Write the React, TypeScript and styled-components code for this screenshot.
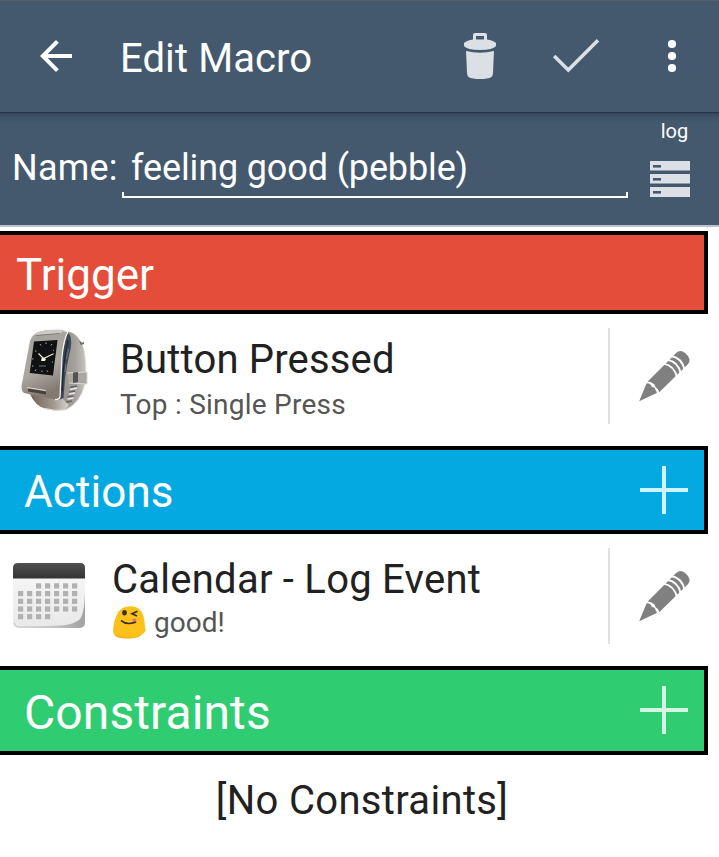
import React from 'react';
import styled, { createGlobalStyle } from 'styled-components';

const GlobalStyle = createGlobalStyle`
  * { box-sizing: border-box; }
  body { margin: 0; background: #fff; font-family: Roboto, "Noto Sans", sans-serif; }
  svg { display: block; flex: none; }
`;

const Screen = styled.main`
  width: 719px;
  height: 857px;
  overflow: hidden;
  background: #fff;
`;

const Label = styled.span<{ $size: number; $line: number; $color?: string; $spacing?: number }>`
  display: block;
  white-space: pre;
  font-size: ${(p) => p.$size}px;
  line-height: ${(p) => p.$line}px;
  color: ${(p) => p.$color ?? '#fff'};
  letter-spacing: ${(p) => p.$spacing ?? 0}px;
`;

const AppBar = styled.header`
  display: grid;
  grid-template-columns: 120px 1fr 96px 96px 95px;
  height: 113px;
  background: #44596d;
  border-top: 1px solid #52616f;
  border-bottom: 1px solid #22334a;
`;

const IconButton = styled.button`
  display: flex;
  align-items: center;
  justify-content: center;
  height: 110px;
  padding: 0;
  border: 0;
  background: none;
`;

const BackButton = styled(IconButton)`
  justify-content: flex-start;
  padding-left: 32px;
`;

const BarTitle = styled.h1`
  margin: 0;
  padding-top: 34px;
  font-weight: 400;
`;

const NameBar = styled.section`
  display: flex;
  height: 114px;
  background: linear-gradient(#354759 0, #3f5366 4px, #44596d 10px);
  border-bottom: 2px solid #bac3cf;
`;

const NameLabel = styled.div`
  width: 122px;
  padding: 32px 0 0 12px;
`;

const NameField = styled.div`
  width: 506px;
  padding: 32px 0 0 9px;
`;

const Underline = styled.div`
  width: 506px;
  height: 6px;
  margin-left: -9px;
  border: solid #fff;
  border-width: 0 2px 2px;
`;

const LogButton = styled.div`
  display: flex;
  flex-direction: column;
  align-items: center;
  width: 84px;
  padding: 6px 0 0;
`;

const LogText = styled.div`
  padding-left: 9px;
  margin-bottom: 18px;
`;

const SectionBar = styled.h2<{ $fill: string; $height: number; $indent: number }>`
  display: flex;
  align-items: flex-start;
  justify-content: space-between;
  width: 708px;
  height: ${(p) => p.$height}px;
  margin: 0;
  padding: 16px 16px 0 ${(p) => p.$indent}px;
  background: ${(p) => p.$fill};
  border: solid #000;
  border-width: 4px 4px 4px 0;
  font-weight: 400;
`;

const Sections = styled.div`
  padding-top: 4px;
`;

const Item = styled.article<{ $text: number }>`
  display: grid;
  grid-template-columns: ${(p) => p.$text}px 1fr 111px;
  height: 132px;
`;

const Thumb = styled.div<{ $left: number; $top: number }>`
  padding: ${(p) => p.$top}px 0 0 ${(p) => p.$left}px;
`;

const ItemText = styled.div`
  padding-top: 22px;
`;

const SubLine = styled.div<{ $height: number }>`
  display: flex;
  align-items: center;
  gap: 8px;
  height: ${(p) => p.$height}px;
`;

const EditButton = styled.button`
  display: flex;
  align-items: center;
  height: 96px;
  margin-top: 14px;
  padding: 0 0 0 29px;
  border: 0;
  border-left: 2px solid #e0e0e0;
  background: none;
`;

const Empty = styled.p`
  margin: 0;
  padding: 22px 0 0 5px;
  text-align: center;
`;

const BackIcon = () => (
  <svg width="48" height="48" viewBox="0 0 24 24" fill="#fff">
    <path d="M20 11H7.83l5.59-5.59L12 4l-8 8 8 8 1.41-1.41L7.83 13H20z" />
  </svg>
);

const TrashIcon = () => (
  <svg width="34" height="48" viewBox="0 0 34 48" fill="#dae0e5">
    <path fillRule="evenodd" d="M10 9V3q0-2 2-2h10q2 0 2 2v6zM13 4v4h8V4z" />
    <path d="M1 11Q4 8 10 7.500h14q6 .5 9 3.500v3q-3 4-16 4T1 14z" />
    <path d="M3 19q14 3.500 28 0l-1 22q0 5-6 5.500-7 1-14 0-6-.5-6-5.500z" />
  </svg>
);

const CheckIcon = () => (
  <svg width="48" height="36" viewBox="0 0 48 36" fill="none" stroke="#dae0e5" strokeWidth="3.500">
    <path d="M2.200 18 16.300 32 46 2.200" />
  </svg>
);

const MoreIcon = () => (
  <svg width="10" height="34" viewBox="0 0 10 34" fill="#fff">
    <circle cx="5" cy="5" r="4.100" />
    <circle cx="5" cy="17" r="4.100" />
    <circle cx="5" cy="29" r="4.100" />
  </svg>
);

const StorageIcon = () => (
  <svg width="40" height="36" viewBox="0 0 40 36">
    {[0, 13, 26].map((y) => (
      <g key={y}>
        <rect y={y} width="40" height={y === 26 ? 10 : 9.500} fill="#dae0e5" />
        <rect x="3" y={y + 4} width="8" height="2.600" fill="#44596d" />
      </g>
    ))}
  </svg>
);

const PlusIcon = ({ color }: { color: string }) => (
  <svg width="48" height="48" viewBox="0 0 48 48" fill={color}>
    <path d="M22 0h4v22h22v4H26v22h-4V26H0v-4h22z" />
  </svg>
);

const PencilIcon = () => (
  <svg width="52" height="52" viewBox="0 0 52 52">
    <path
      d="M.2 51.200 7.500 33.600q1.500-.6 2.800.2 1.600.4 2.600 3.200 3.500.3 3.600 3.200 1.600 1.200 1.200 2.900zM8.700 31.500 37.400 2.700q4-3.700 8.700.2 3.800 3 4.400 6.300.4 3-1.600 5.100L20.200 42.300Q19.700 38.600 16.700 37.300 16 34 13.300 33 11.800 31.500 8.700 31.500z"
      fill="#808080"
    />
    <path
      d="M24.500 13.600Q35.500 15.500 38 27.500M28.300 9.800Q39.300 11.700 41.800 23.700M32.100 6Q43.100 7.900 45.600 19.900"
      fill="none"
      stroke="#fff"
      strokeWidth="1.900"
    />
  </svg>
);

const WatchImage = () => (
  <svg width="70" height="84" viewBox="0 0 70 84">
    <defs>
      <linearGradient id="band" x1="0" x2="1">
        <stop offset="0" stopColor="#8c8680" />
        <stop offset=".65" stopColor="#a5a19b" />
        <stop offset="1" stopColor="#c5c3bf" />
      </linearGradient>
      <linearGradient id="case" x1="0" y1="0" x2=".3" y2="1">
        <stop offset="0" stopColor="#a6a39d" />
        <stop offset=".65" stopColor="#aaa69f" />
        <stop offset="1" stopColor="#827970" />
      </linearGradient>
      <linearGradient id="strap" x1="0" x2="1">
        <stop offset="0" stopColor="#716056" />
        <stop offset=".6" stopColor="#a19890" />
        <stop offset="1" stopColor="#d6d3ce" />
      </linearGradient>
    </defs>
    <path d="M47 2Q60 5 64 21q3 18 1 33-4 20-20 27L35 68z" fill="url(#band)" />
    <path d="M59 12l4 2 1-2v3l-3 1z" fill="#666" />
    <path d="M64 21q3 18 1 33-4 20-20 27" fill="none" stroke="#dddcd9" strokeWidth="1" />
    <path d="M10 65Q15 77 26 80q10 3 19 1l4-5-9-9z" fill="url(#strap)" />
    <path d="M25 79.500q10 3 20 1.300" fill="none" stroke="#e5e1dd" strokeWidth="1" />
    <path d="M47 44l20-1v12l-18-1z" fill="#aaa7a2" />
    <path d="M47 44l20-1M49 54l18 1M67 43v12" stroke="#d9d8d4" strokeWidth="1" />
    <path d="M53 43.500l5-.5v10l-5 1z" fill="#55534f" />
    <path d="M50 58.500l7-1.500M49 63l6-1M47.500 68l6-1M46 73l6-1" stroke="#66615b" strokeWidth="1.700" />
    <path d="M50 60.500l7-1.500M49 65l6-1M47.500 70l6-1" stroke="#eceae6" strokeWidth="1.300" />
    <path d="M47 3Q53 7 50.500 20 47 34 45 49L43.500 69 38 71 41 30Z" fill="#3b4756" />
    <path d="M48 11q-5 22-6 51" fill="none" stroke="#1d2835" strokeWidth="1.200" />
    <path d="M48.500 20l-2 10M46 35l-1 8" stroke="#6d7987" strokeWidth="1" />
    <path d="M18 3Q33-1 48 2.500 43.500 11 42 28L40 68q-1 3-5 2.500L4 64Q1 62 1.500 57L10 12Q12 6 18 3Z" fill="url(#case)" />
    <path d="M28 .8Q40 0 48 2.500 43.500 11 42 28L40 68q-1 3-5 2.500" fill="none" stroke="#f2f2ef" strokeWidth="1.300" />
    <path d="M18 3q12-3 26-2l-4 4-25 1z" fill="#cccac5" />
    <path d="M16 6.500l24-2" stroke="#79736d" strokeWidth=".9" />
    <path d="M8 59.500l18 3v3L8 62.500z" fill="#4b4039" />
    <path d="M7 58.500l19 3" stroke="#d8d5d0" strokeWidth="1" />
    <path d="M14 12.500 37.500 11 33 46.500 9.700 44z" fill="#101112" />
    <path d="M18.500 24.500l5 5 10-4.800" fill="none" stroke="#f1f0df" strokeWidth="1.100" />
    <path d="M22 28l4 2-1 2h-4z" fill="#f8f3da" />
    <path d="M19 37h7" stroke="#777" strokeWidth="1" />
    <path d="M26 13.500v1.500M32 15l-1 1.500M20 15l1 1.500M15 22h1.500M34 21l-1 .5M12 30h1.500M33 33h-1M12 37h1.500M15 42l1-1.500M22 43v-1.500M28 43l-1-1.500" stroke="#bbb" strokeWidth=".9" />
  </svg>
);

const CalendarImage = () => {
  const cells: [number, number][] = [];
  for (let row = 0; row < 5; row++) {
    for (let col = row === 0 ? 2 : 0; col < (row === 4 ? 4 : 7); col++) cells.push([col, row]);
  }
  return (
    <svg width="74" height="67" viewBox="0 0 74 67">
      <defs>
        <linearGradient id="page" x1="0" y1="0" x2="0" y2="1">
          <stop offset="0" stopColor="#f5f5f5" />
          <stop offset="1" stopColor="#e9e9e9" />
        </linearGradient>
        <linearGradient id="head" x1="0" y1="0" x2="0" y2="1">
          <stop offset="0" stopColor="#505050" />
          <stop offset="1" stopColor="#343434" />
        </linearGradient>
        <linearGradient id="curl">
          <stop offset="0" stopColor="#ededed" />
          <stop offset="1" stopColor="#a2a2a2" />
        </linearGradient>
      </defs>
      <rect x="1" y="0" width="72" height="65" rx="5" fill="url(#curl)" />
      <path d="M1 15h72v10q0 24-5 31-5 5-18 6.500L6 64q-5 0-5-5z" fill="url(#page)" />
      <path d="M2 60q1 4 5 4h30" fill="none" stroke="#c4c4c4" />
      <path d="M1 15.500V5q0-5 5-5h62q5 0 5 5v10.500z" fill="url(#head)" />
      {cells.map(([col, row]) => (
        <rect key={`${col}-${row}`} x={6 + col * 9} y={20.300 + row * 7.700} width="5.200" height="5.200" fill="#b1b1b1" />
      ))}
    </svg>
  );
};

const WinkEmoji = () => (
  <svg width="34" height="34" viewBox="0 .7 34 34">
    <path d="M1 25Q1.500 15 6 7q5-7 14-6 9.500 1 11.500 10 1.500 7 1.500 11.500 1.800 4.500-2.200 6Q28 32 20 33 13 33.500 7 32.500 1 31 1 25z" fill="#fcc21b" />
    <path d="M2 29q6 3 15 3 8 0 13-3.500l-1 1.500q-3 2.500-9 3-7 .5-13-.5-3-.5-5-3.500z" fill="#f7a81d" opacity=".55" />
    <ellipse cx="12.500" cy="7.500" rx="2.300" ry="2.700" fill="#35302a" />
    <path d="M25.500 6l-5.500 2.500 5 2.300" fill="none" stroke="#35302a" strokeWidth="1.600" />
    <path d="M20 14.500q3-2.500 4.500 0 0 3-2.500 3z" fill="#ee6c7e" />
    <path d="M9.500 15.500q5 4.500 14 1.500" fill="none" stroke="#35302a" strokeWidth="1.700" strokeLinecap="round" />
  </svg>
);

const Edit = () => (
  <EditButton aria-label="Edit">
    <PencilIcon />
  </EditButton>
);

export default function App() {
  return (
    <Screen>
      <GlobalStyle />
      <AppBar>
        <BackButton aria-label="Back"><BackIcon /></BackButton>
        <BarTitle><Label $size={40} $line={48} $spacing={0.1}>Edit Macro</Label></BarTitle>
        <IconButton aria-label="Delete"><TrashIcon /></IconButton>
        <IconButton aria-label="Save"><CheckIcon /></IconButton>
        <IconButton aria-label="More"><MoreIcon /></IconButton>
      </AppBar>
      <NameBar>
        <NameLabel><Label $size={36} $line={47} $spacing={0.2}>Name:</Label></NameLabel>
        <NameField>
          <Label $size={36} $line={47} $spacing={-0.13}>feeling good (pebble)</Label>
          <Underline />
        </NameField>
        <LogButton>
          <LogText><Label $size={20} $line={24}>log</Label></LogText>
          <StorageIcon />
        </LogButton>
      </NameBar>
      <Sections>
        <SectionBar $fill="#e54d3b" $height={83} $indent={16}>
          <Label $size={44} $line={48}>Trigger</Label>
        </SectionBar>
        <Item $text={120}>
          <Thumb $left={20} $top={15}><WatchImage /></Thumb>
          <ItemText>
            <Label $size={40} $line={48} $color="#212121" $spacing={0.17}>Button Pressed</Label>
            <SubLine $height={41}><Label $size={28} $line={40} $color="#555" $spacing={0.24}>Top : Single Press</Label></SubLine>
          </ItemText>
          <Edit />
        </Item>
        <SectionBar $fill="#05a9e2" $height={88} $indent={24}>
          <Label $size={44} $line={52} $spacing={0.1}>Actions</Label>
          <PlusIcon color="#cdf3fc" />
        </SectionBar>
        <Item $text={112}>
          <Thumb $left={12} $top={29}><CalendarImage /></Thumb>
          <ItemText>
            <Label $size={40} $line={48} $color="#212121" $spacing={0.25}>Calendar - Log Event</Label>
            <SubLine $height={38}>
              <WinkEmoji />
              <Label $size={28} $line={40} $color="#555">good!</Label>
            </SubLine>
          </ItemText>
          <Edit />
        </Item>
        <SectionBar $fill="#30cc72" $height={89} $indent={24}>
          <Label $size={48} $line={54} $spacing={0.1}>Constraints</Label>
          <PlusIcon color="#d5f6e2" />
        </SectionBar>
        <Empty><Label $size={40} $line={48} $color="#212121" $spacing={0.33}>[No Constraints]</Label></Empty>
      </Sections>
    </Screen>
  );
}
